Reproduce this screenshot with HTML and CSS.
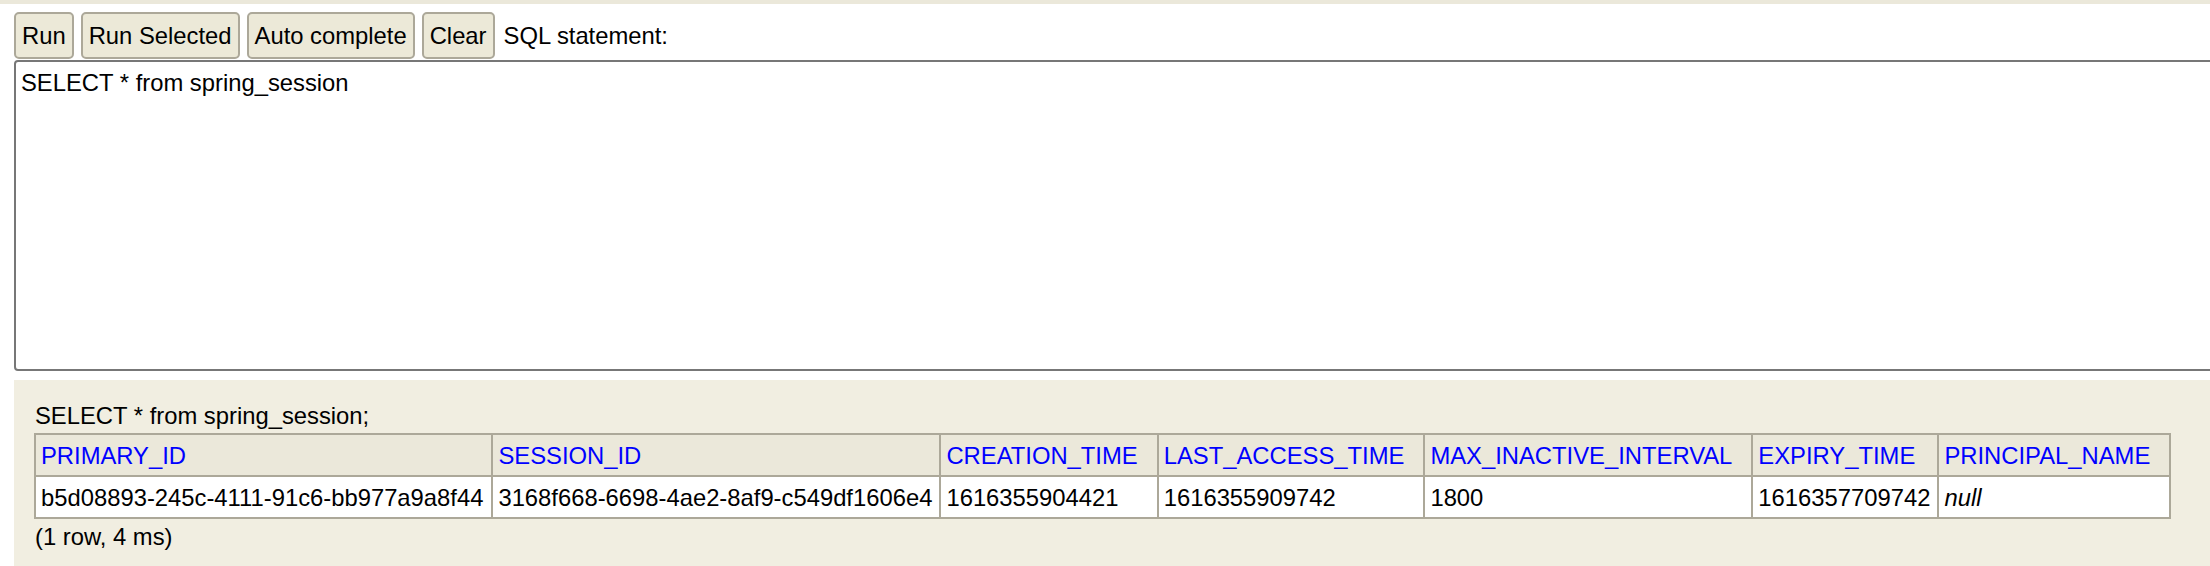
FILE: index.html
```
<!DOCTYPE html>
<html>
<head>
<meta charset="utf-8">
<link rel="stylesheet" href="styles.css">
</head>
<body>
<div class="topstrip"></div>
<div class="toolbar">
  <button class="btn">Run</button>
  <button class="btn">Run Selected</button>
  <button class="btn">Auto complete</button>
  <button class="btn">Clear</button>
  <span class="label">SQL statement:</span>
</div>
<textarea class="sql">SELECT * from spring_session</textarea>
<div class="result">
  <div class="stmt">SELECT * from spring_session;</div>
  <table class="rs">
    <tr>
      <th>PRIMARY_ID</th>
      <th>SESSION_ID</th>
      <th>CREATION_TIME</th>
      <th>LAST_ACCESS_TIME</th>
      <th>MAX_INACTIVE_INTERVAL</th>
      <th>EXPIRY_TIME</th>
      <th>PRINCIPAL_NAME</th>
    </tr>
    <tr>
      <td class="uuid">b5d08893-245c-4111-91c6-bb977a9a8f44</td>
      <td>3168f668-6698-4ae2-8af9-c549df1606e4</td>
      <td>1616355904421</td>
      <td>1616355909742</td>
      <td>1800</td>
      <td>1616357709742</td>
      <td><i>null</i></td>
    </tr>
  </table>
  <div class="count">(1 row, 4 ms)</div>
</div>
</body>
</html>
```
FILE: styles.css
```
html, body {
  margin: 0;
  padding: 0;
  overflow: hidden;
  background: #fff;
}
body {
  font-family: "Liberation Sans", Arial, sans-serif;
  font-size: 23.8px;
  line-height: 27px;
  color: #000;
  width: 2210px;
  height: 566px;
}
.topstrip {
  height: 4px;
  background: #ebe8da;
}
.toolbar {
  display: flex;
  align-items: center;
  gap: 7px;
  padding: 8px 0 1px 14px;
}
.btn {
  font: inherit;
  line-height: 27px;
  color: #000;
  background: #ece9d8;
  border: 2px solid #aca899;
  border-radius: 5px;
  padding: 8px 6px;
  margin: 0;
}
.label {
  margin-left: 2px;
}
.sql {
  display: block;
  box-sizing: border-box;
  margin: 0 0 0 14px;
  width: 2260px;
  height: 311px;
  font: inherit;
  line-height: 27px;
  color: #000;
  border: 2px solid #777;
  border-radius: 4px;
  padding: 7px 5px;
  resize: none;
  outline: none;
}
.result {
  box-sizing: border-box;
  margin: 9px 0 0 14px;
  background: #f1eee1;
  padding: 22px 0 0 20px;
  height: 186px;
}
.stmt {
  padding-left: 1px;
  margin-bottom: 4px;
}
.rs {
  border-collapse: collapse;
}
.rs th, .rs td {
  border: 2px solid #aca899;
  padding: 7px 7px 6px 5px;
  text-align: left;
  white-space: nowrap;
  font-weight: normal;
}
.rs th {
  background: #ebe8da;
  color: #0000ff;
  padding-right: 19px;
}
.rs td {
  background: #fff;
}
.rs td.uuid {
  padding-right: 8px;
}
.count {
  padding-left: 1px;
  margin-top: 4px;
}
```
